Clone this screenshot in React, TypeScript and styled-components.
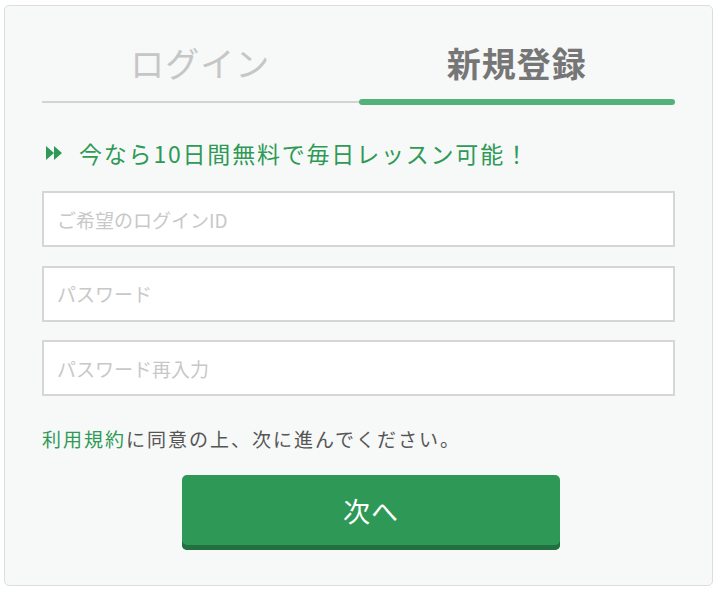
import React from 'react';
import styled, { createGlobalStyle } from 'styled-components';

const GlobalStyle = createGlobalStyle`
  html, body {
    margin: 0;
    padding: 0;
    background: #ffffff;
  }
  body {
    font-family: "Noto Sans CJK JP", "Noto Sans", "Liberation Sans", sans-serif;
  }
  * {
    box-sizing: border-box;
  }
`;

const Page = styled.div`
  padding: 5px 0 0 4px;
`;

const Panel = styled.div`
  width: 709px;
  height: 581px;
  padding: 37px 37px 0 37px;
  background: #f7f8f8;
  border: 1px solid #dcdddd;
  border-radius: 5px;
`;

const Tabs = styled.div`
  display: flex;
`;

const Tab = styled.div`
  flex: 1;
  display: flex;
  flex-direction: column;
  align-items: stretch;
  text-align: center;
  cursor: pointer;
`;

const TabLabel = styled.span<{ $active?: boolean }>`
  font-size: 34px;
  line-height: 40px;
  font-weight: ${(p) => (p.$active ? 700 : 400)};
  color: ${(p) => (p.$active ? '#767676' : '#c6c6c6')};
  letter-spacing: 1px;
`;

const TabBar = styled.div<{ $active?: boolean }>`
  height: ${(p) => (p.$active ? '6px' : '2px')};
  margin-top: ${(p) => (p.$active ? '16px' : '18px')};
  margin-bottom: ${(p) => (p.$active ? '0' : '2px')};
  background: ${(p) => (p.$active ? '#52b27a' : '#d3d3d3')};
  border-radius: ${(p) => (p.$active ? '3px' : '0')};
`;

const Promo = styled.p`
  display: flex;
  align-items: center;
  margin: 33px 0 0 4px;
  font-size: 23px;
  line-height: 30px;
  letter-spacing: 1.8px;
  color: #2e9a55;
`;

const PromoIcon = styled.svg`
  width: 16px;
  height: 14px;
  margin-right: 17px;
  flex-shrink: 0;
`;

const Fields = styled.div`
  display: flex;
  flex-direction: column;
  gap: 18.5px;
  margin-top: 23px;
`;

const Input = styled.input`
  display: block;
  width: 100%;
  height: 56px;
  padding: 0 13px;
  border: 2px solid #d6d6d6;
  background: #ffffff;
  font-family: inherit;
  font-size: 19px;
  color: #333;
  outline: none;

  &::placeholder {
    color: #c8c8c8;
  }
`;

const Terms = styled.p`
  margin: 29px 0 0 0;
  font-size: 19px;
  line-height: 28px;
  letter-spacing: 2px;
  color: #555555;
`;

const TermsLink = styled.a`
  color: #2e9a55;
  text-decoration: none;
`;

const ButtonRow = styled.div`
  display: flex;
  padding-left: 140px;
  margin-top: 22px;
`;

const NextButton = styled.button`
  width: 378px;
  height: 75px;
  padding-bottom: 5px;
  border: none;
  border-radius: 5px;
  background: #2e9856;
  box-shadow: inset 0 -5px 0 #22703f;
  color: #ffffff;
  font-family: inherit;
  font-size: 27px;
  letter-spacing: 1px;
  cursor: pointer;
`;

export default function App() {
  return (
    <Page>
      <GlobalStyle />
      <Panel>
        <Tabs>
          <Tab>
            <TabLabel>ログイン</TabLabel>
            <TabBar />
          </Tab>
          <Tab>
            <TabLabel $active>新規登録</TabLabel>
            <TabBar $active />
          </Tab>
        </Tabs>

        <Promo>
          <PromoIcon viewBox="0 0 16 14">
            <path d="M0 0 L8 7 L0 14 Z M8 0 L16 7 L8 14 Z" fill="#2e9a55" />
          </PromoIcon>
          今なら10日間無料で毎日レッスン可能！
        </Promo>

        <Fields>
          <Input type="text" placeholder="ご希望のログインID" />
          <Input type="password" placeholder="パスワード" />
          <Input type="password" placeholder="パスワード再入力" />
        </Fields>

        <Terms>
          <TermsLink href="#">利用規約</TermsLink>に同意の上、次に進んでください。
        </Terms>

        <ButtonRow>
          <NextButton type="button">次へ</NextButton>
        </ButtonRow>
      </Panel>
    </Page>
  );
}
